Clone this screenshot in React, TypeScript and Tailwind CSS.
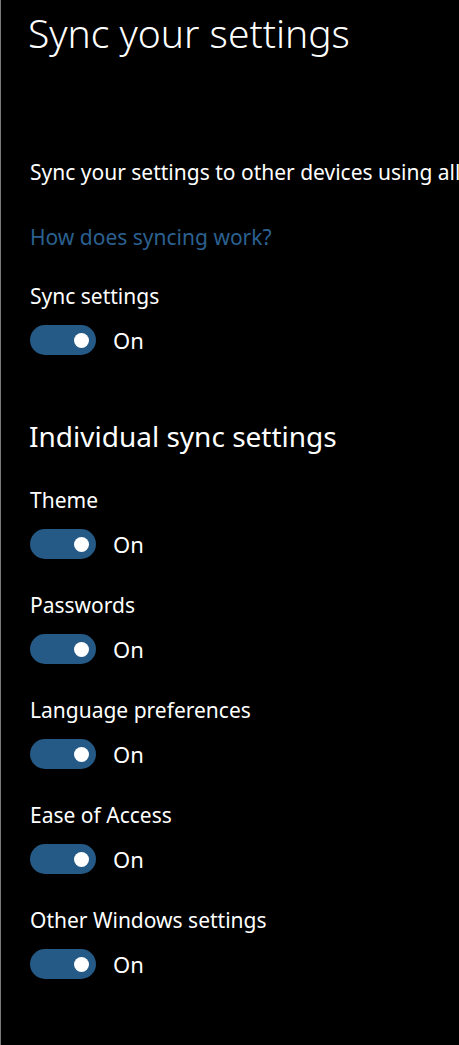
import React from "react";

const font = { fontFamily: '"Segoe UI", "Noto Sans", "Open Sans", sans-serif' };

function Toggle() {
  return (
    <div className="flex items-center h-[30px] mt-[14px]">
      <div className="relative w-[66px] h-[30px] rounded-full bg-[#245a85] shrink-0">
        <div className="absolute right-[7px] top-[7.5px] w-[15px] h-[15px] rounded-full bg-white" />
      </div>
      <span className="ml-[17px] text-[22px] leading-[30px] text-white">On</span>
    </div>
  );
}

function Item({ label }: { label: string }) {
  return (
    <div>
      <div className="text-[21px] leading-[30px] text-white">{label}</div>
      <Toggle />
    </div>
  );
}

export default function App() {
  return (
    <div
      className="w-[459px] h-[1045px] bg-black border-l border-[#7a7a7a] overflow-hidden"
      style={font}
    >
      <div className="pl-[29px] pt-[8px]">
        <h1 className="-ml-[2px] text-[39px] leading-[50px] font-light text-white whitespace-nowrap">
          Sync your settings
        </h1>
        <p className="mt-[99px] text-[21px] leading-[30px] text-white whitespace-nowrap">
          Sync your settings to other devices using all
        </p>
        <a className="block mt-[35px] text-[21px] leading-[30px] text-[#2b6190]">
          How does syncing work?
        </a>
        <div className="mt-[29px]">
          <div className="text-[21px] leading-[30px] text-white">Sync settings</div>
          <Toggle />
        </div>
        <h2 className="-ml-[1px] mt-[61px] text-[28px] leading-[40px] text-white whitespace-nowrap">
          Individual sync settings
        </h2>
        <div className="mt-[29px] flex flex-col gap-[31px]">
          <Item label="Theme" />
          <Item label="Passwords" />
          <Item label="Language preferences" />
          <Item label="Ease of Access" />
          <Item label="Other Windows settings" />
        </div>
      </div>
    </div>
  );
}
